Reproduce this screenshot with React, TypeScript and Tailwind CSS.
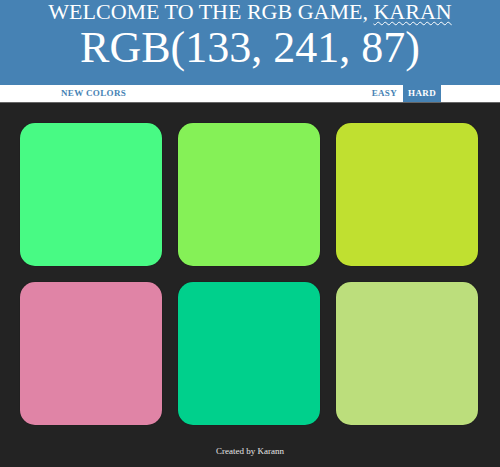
const squares = ["#48fa84", "#85f157", "#c0e030", "#e084a6", "#00d08c", "#bcde7c"];

const App = () => {
  return (
    <div className="w-[500px] h-[467px] bg-[#232323] font-['Liberation_Serif',serif] flex flex-col">
      <div className="bg-[#4682b4] text-white text-center pb-[12px]">
        <h1 className="text-[22px] leading-[23px] font-normal">
          WELCOME TO THE RGB GAME,{" "}
          <span className="underline decoration-wavy decoration-1 underline-offset-2">KARAN</span>
        </h1>
        <h2 className="text-[44px] leading-[50px] font-normal">RGB(133, 241, 87)</h2>
      </div>
      <div className="bg-white h-[18px] flex items-stretch text-[9px] font-bold tracking-[0.35px] text-[#4682b4] border-b border-[#666]">
        <div className="ml-[61px] flex items-center">NEW COLORS</div>
        <div className="ml-auto flex items-center pr-[6px]">EASY</div>
        <div className="bg-[#4682b4] text-white flex items-center px-[5px] mr-[59px]">HARD</div>
      </div>
      <div className="grid grid-cols-[142px_142px_142px] gap-x-[16px] gap-y-[16px] pl-[20px] pt-[20px]">
        {squares.map((c) => (
          <div
            key={c}
            className="h-[143px] rounded-[15px] shadow-[0_0_1px_rgba(0,0,0,0.6)]"
            style={{ backgroundColor: c }}
          />
        ))}
      </div>
      <p className="text-center text-[#e6e6e6] text-[9px] mt-[20px]">Created by Karann</p>
    </div>
  );
};

export default App;
